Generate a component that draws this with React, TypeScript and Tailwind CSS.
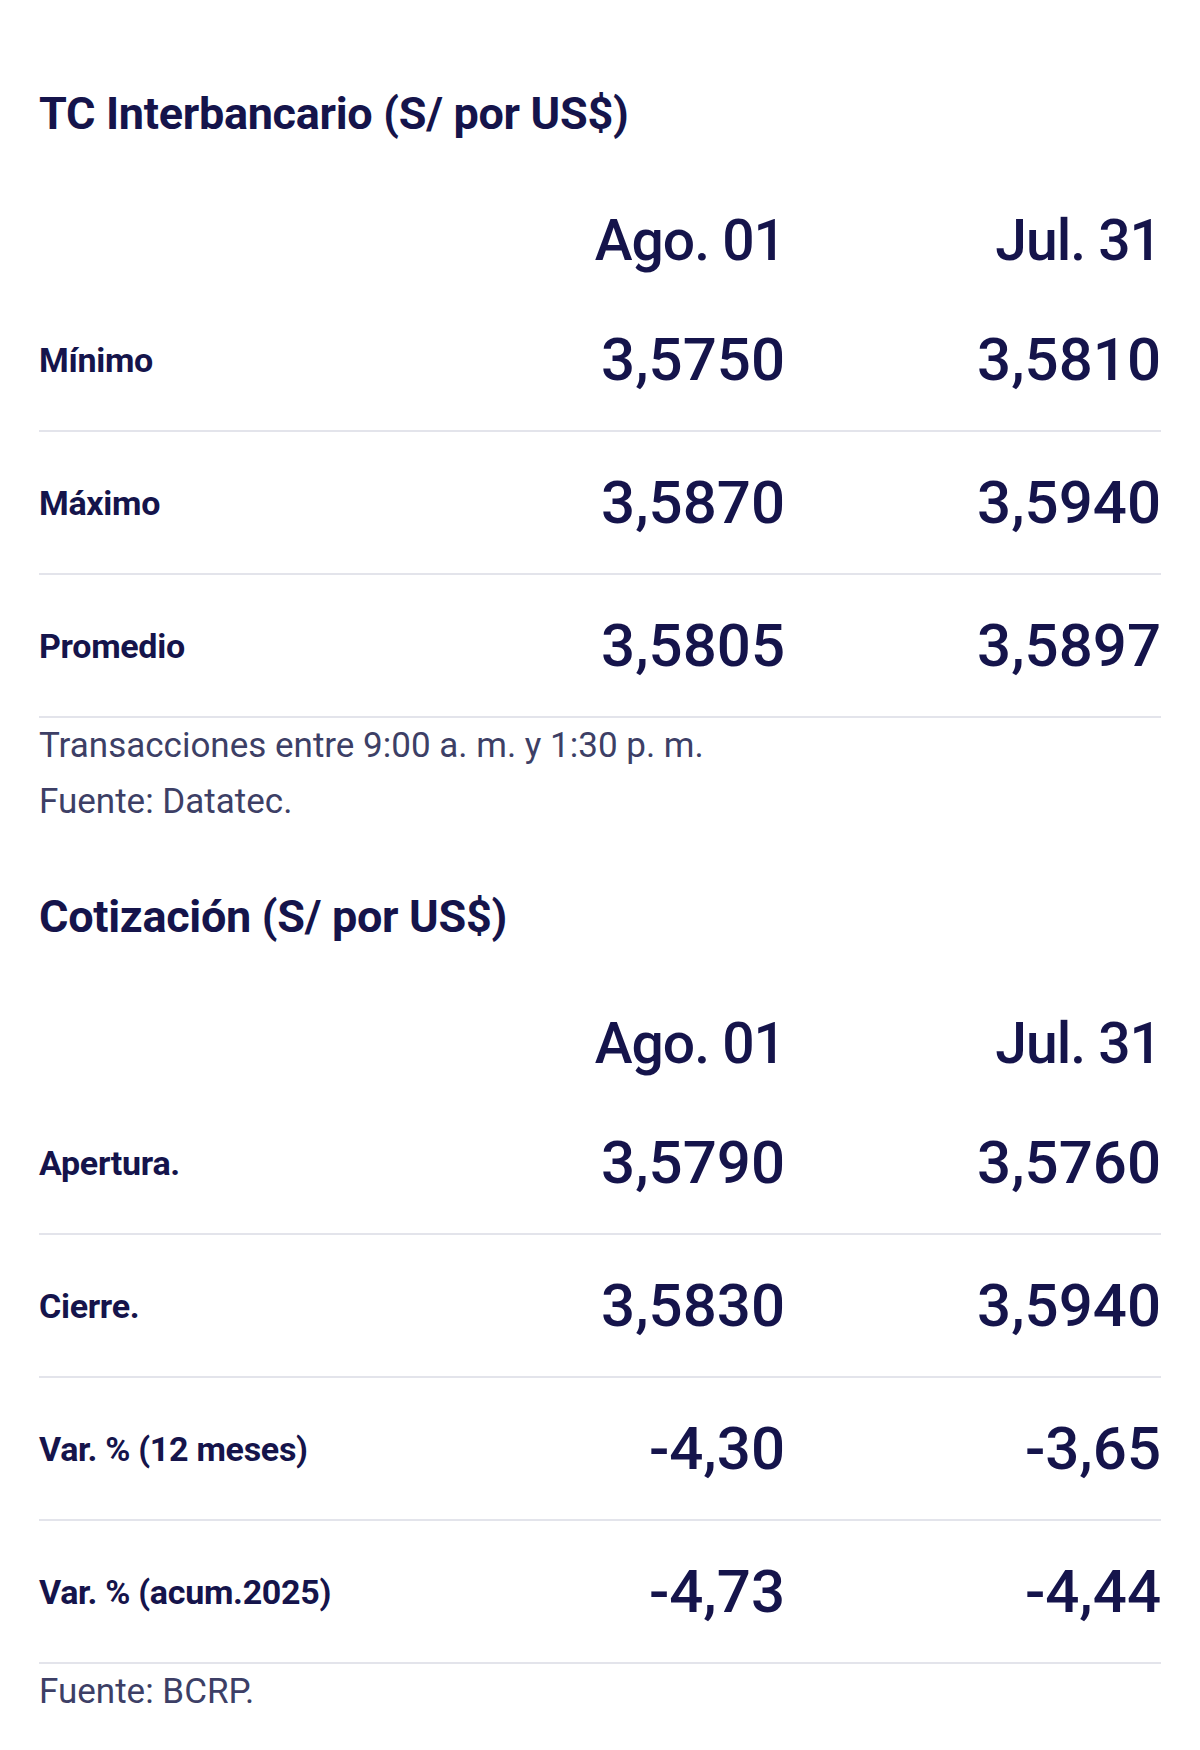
import React from "react";

interface Row {
  label: string;
  a: string;
  b: string;
}

interface TableSectionProps {
  title: string;
  rows: Row[];
  notes: string[];
  className?: string;
}

const interbancario: Row[] = [
  { label: "Mínimo", a: "3,5750", b: "3,5810" },
  { label: "Máximo", a: "3,5870", b: "3,5940" },
  { label: "Promedio", a: "3,5805", b: "3,5897" },
];

const cotizacion: Row[] = [
  { label: "Apertura.", a: "3,5790", b: "3,5760" },
  { label: "Cierre.", a: "3,5830", b: "3,5940" },
  { label: "Var. % (12 meses)", a: "-4,30", b: "-3,65" },
  { label: "Var. % (acum.2025)", a: "-4,73", b: "-4,44" },
];

function TableSection({ title, rows, notes, className }: TableSectionProps) {
  return (
    <section className={className}>
      <h2 className="h-[57px] flex items-center text-[45px] font-bold leading-none tracking-[-0.3px]">
        {title}
      </h2>

      {/* Column headers */}
      <div className="mt-[49px] grid grid-cols-[1fr_240px_376px] h-[98px] items-center">
        <span />
        <span className="text-right text-[57px] font-medium leading-none tracking-[-1px] whitespace-nowrap">
          Ago. 01
        </span>
        <span className="text-right text-[57px] font-medium leading-none tracking-[-1px] whitespace-nowrap">
          Jul. 31
        </span>
      </div>

      {rows.map((row) => (
        <div
          key={row.label}
          className="grid grid-cols-[1fr_240px_376px] h-[143px] items-center border-b-2 border-[#e3e4eb]"
        >
          <span className="text-[34px] font-bold leading-none tracking-[-0.3px]">{row.label}</span>
          <span className="text-right text-[60px] font-medium leading-none whitespace-nowrap">
            {row.a}
          </span>
          <span className="text-right text-[60px] font-medium leading-none whitespace-nowrap">
            {row.b}
          </span>
        </div>
      ))}

      <div className="text-[35px] leading-[56px] text-[#3d3f66]">
        {notes.map((n) => (
          <p key={n}>{n}</p>
        ))}
      </div>
    </section>
  );
}

export default function App() {
  return (
    <div className="w-[1200px] h-[1750px] bg-white">
      <div className="h-[1703px] overflow-hidden px-[39px] pt-[85px] text-[#15144b] font-['Roboto',sans-serif]">
        <TableSection
          title="TC Interbancario (S/ por US$)"
          rows={interbancario}
          notes={["Transacciones entre 9:00 a. m. y 1:30 p. m.", "Fuente: Datatec."]}
        />
        <TableSection
          className="mt-[58px]"
          title="Cotización (S/ por US$)"
          rows={cotizacion}
          notes={["Fuente: BCRP."]}
        />
      </div>
    </div>
  );
}
